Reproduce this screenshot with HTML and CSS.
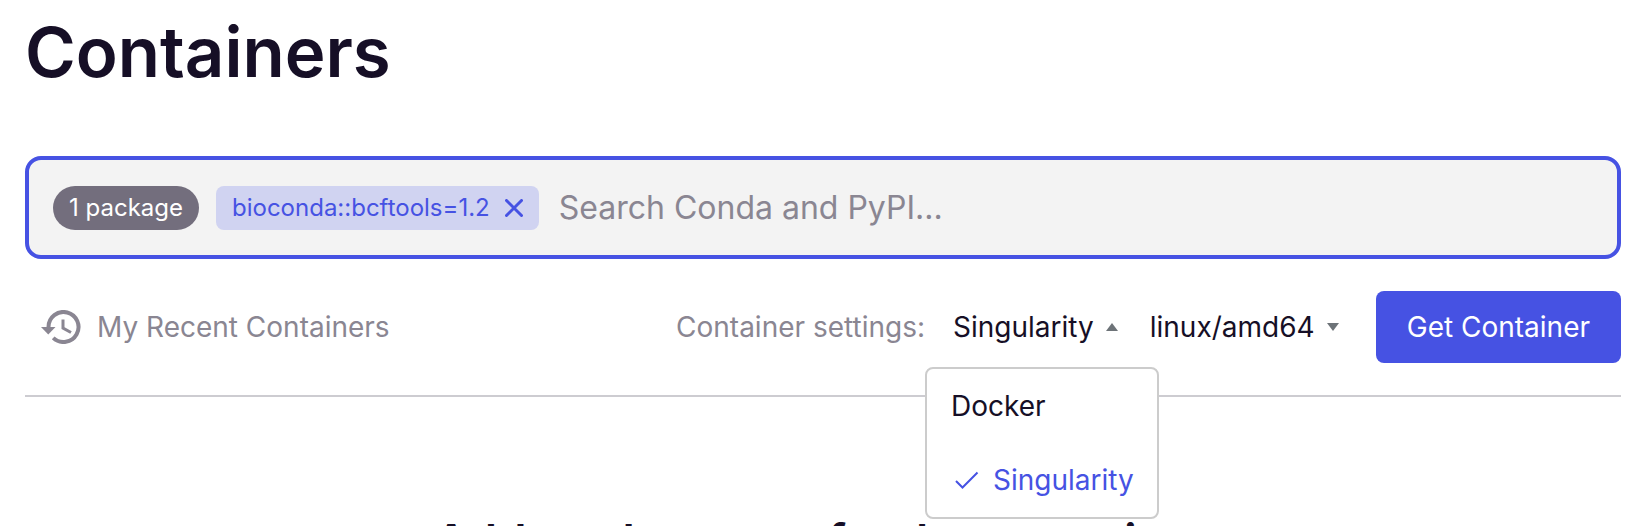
FILE: index.html
```html
<!doctype html>
<html lang="en">
<head>
  <meta charset="utf-8">
  <meta name="viewport" content="width=device-width, initial-scale=1">
  <title>Containers</title>
  <link rel="stylesheet" href="styles.css">
</head>
<body>

<main class="page">
  <h1 class="page-title">Containers</h1>

  <!-- search box with the picked packages -->
  <form class="search-box">
    <span class="count-pill">1 package</span>
    <span class="package-tag">
      bioconda::bcftools=1.2
      <button type="button" class="tag-remove" aria-label="Remove bioconda::bcftools=1.2">
        <svg width="18" height="18" viewBox="0 0 18 18"><path d="M1.5 1.5 16.5 16.5M16.5 1.5 1.5 16.5" /></svg>
      </button>
    </span>
    <input type="text" class="search-input" placeholder="Search Conda and PyPI..." aria-label="Search Conda and PyPI">
  </form>

  <!-- history link and container settings -->
  <div class="toolbar">
    <a href="#" class="recent-link">
      <svg class="history-icon" width="40" height="34" viewBox="0 0 40 34">
        <path class="ring" d="M7.5 17.5V17A15 15 0 1 1 12.2 27.9" />
        <path class="hands" d="M22 9.500V18L30 22.500" />
        <path class="head" d="M0 17H14.500L7.250 24.500Z" />
      </svg>
      My Recent Containers
    </a>

    <div class="settings">
      <span class="settings-label" id="settings-label">Container settings:</span>
      <div class="dropdown">
        <button type="button" class="dropdown-btn" aria-haspopup="listbox" aria-expanded="true">
          Singularity <span class="caret up"></span>
        </button>
        <ul class="dropdown-menu" role="listbox" aria-labelledby="settings-label">
          <li class="dropdown-item" role="option" aria-selected="false">Docker</li>
          <li class="dropdown-item selected" role="option" aria-selected="true">
            <svg width="24" height="18" viewBox="0 0 24 18"><path d="M1 10 7.500 16.500 22.500 1.500" /></svg>
            Singularity
          </li>
        </ul>
      </div>
      <label class="platform">
        <select class="platform-select" aria-label="Platform">
          <option>linux/amd64</option>
        </select>
        <span class="caret"></span>
      </label>
      <button type="button" class="get-btn">Get Container</button>
    </div>
  </div>

  <h2 class="empty-title">Add packages to fetch a container</h2>
</main>

</body>
</html>
```
FILE: styles.css
```css
* {
  box-sizing: border-box;
}

body {
  margin: 0;
  background: #fff;
  color: #160f26;
  font-family: Inter, "Liberation Sans", sans-serif;
  font-size: 28px;
  line-height: 36px;
  overflow: hidden;
}

button,
input,
select {
  font: inherit;
  color: inherit;
}

.page {
  padding: 12px 25px 0;
}

.page-title {
  margin: 0 0 64px;
  font-size: 69px;
  font-weight: 600;
  line-height: 80px;
}

.search-box {
  display: flex;
  align-items: center;
  padding: 26px 24px 25px;
  background: #f3f3f3;
  border: 4px solid #4652e3;
  border-radius: 16px;
}

.count-pill,
.package-tag {
  display: flex;
  align-items: center;
  height: 44px;
  padding: 0 16px;
  font-size: 24px;
  white-space: nowrap;
}

.count-pill {
  margin-right: 17px;
  background: #736e7d;
  border-radius: 22px;
  color: #fff;
}

.package-tag {
  gap: 15px;
  background: #d0d3f1;
  border-radius: 8px;
  color: #4652e3;
}

.tag-remove {
  display: flex;
  padding: 0;
  border: none;
  background: none;
  cursor: pointer;
}

.tag-remove svg {
  fill: none;
  stroke: #4652e3;
  stroke-width: 3;
  stroke-linecap: round;
}

.search-input {
  flex: 1;
  min-width: 0;
  padding: 0 20px;
  border: none;
  outline: none;
  background: none;
  font-size: 32px;
}

.search-input::placeholder {
  color: #8a8692;
  opacity: 1;
}

.toolbar {
  display: flex;
  align-items: center;
  justify-content: space-between;
  padding: 32px 0;
  border-bottom: 2px solid #cdccd1;
}

.recent-link {
  display: flex;
  align-items: center;
  gap: 16px;
  padding-left: 16px;
  color: #8a8692;
  text-decoration: none;
}

.history-icon {
  fill: none;
  stroke: #8a8692;
}

.history-icon .ring {
  stroke-width: 4;
}

.history-icon .hands {
  stroke-width: 3;
}

.history-icon .head {
  fill: #8a8692;
  stroke: none;
}

.settings {
  display: flex;
  align-items: center;
}

.settings-label {
  color: #8a8692;
}

.dropdown {
  position: relative;
  margin-left: 28px;
}

.dropdown-btn,
.platform {
  display: flex;
  align-items: center;
  gap: 12px;
  padding: 0;
  border: none;
  background: none;
  cursor: pointer;
}

.caret {
  border: 6px solid transparent;
  border-top: 8px solid #6d7378;
  border-bottom: none;
}

.caret.up {
  border-top: none;
  border-bottom: 8px solid #6d7378;
}

.dropdown-menu {
  position: absolute;
  top: 58px;
  left: -28px;
  z-index: 10;
  margin: 0;
  padding: 0 23px 0 24px;
  border: 2px solid #cccccc;
  border-radius: 8px;
  background: #fff;
  list-style: none;
}

.dropdown-item {
  display: flex;
  align-items: center;
  gap: 14px;
  height: 74px;
  white-space: nowrap;
  cursor: pointer;
}

.dropdown-item.selected {
  color: #4652e3;
}

.dropdown-item svg {
  margin-left: 4px;
  fill: none;
  stroke: #4652e3;
  stroke-width: 2;
}

.platform {
  margin-left: 32px;
}

.platform-select {
  padding: 0;
  border: none;
  background: none;
  appearance: none;
  cursor: pointer;
}

.get-btn {
  height: 72px;
  margin-left: 37px;
  padding: 0 31px;
  border: none;
  border-radius: 8px;
  background: #4652e3;
  color: #fff;
  cursor: pointer;
}

.empty-title {
  margin: 114px 0 0;
  font-size: 47px;
  font-weight: 600;
  line-height: 60px;
  text-align: center;
}
```
